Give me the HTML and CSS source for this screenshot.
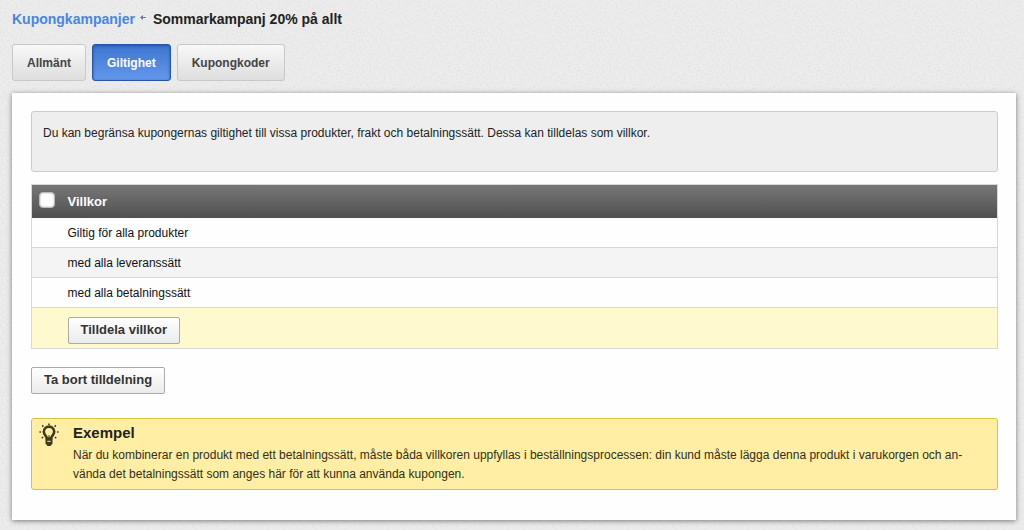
FILE: index.html
```html
<!DOCTYPE html>
<html lang="sv">
<head>
<meta charset="utf-8">
<title>Kupongkampanjer</title>
<link rel="stylesheet" href="styles.css">
</head>
<body>
<nav class="breadcrumb">
  <a class="crumb-link" href="#">Kupongkampanjer</a>
  <svg class="crumb-arrow" viewBox="0 0 7 7" aria-hidden="true"><path d="M0 3.5 3 1V6ZM3 3H6V4H3Z"/></svg>
  <h1 class="crumb-title">Sommarkampanj 20% på allt</h1>
</nav>
<div class="tabs">
  <button class="tab" type="button">Allmänt</button>
  <button class="tab tab-active" type="button">Giltighet</button>
  <button class="tab" type="button">Kupongkoder</button>
</div>
<main class="panel">
  <div class="info">Du kan begränsa kupongernas giltighet till vissa produkter, frakt och betalningssätt. Dessa kan tilldelas som villkor.</div>
  <table class="terms">
    <thead>
      <tr><th class="check-cell"><input class="check" type="checkbox" aria-label="Markera alla villkor"></th><th>Villkor</th></tr>
    </thead>
    <tbody>
      <tr><td></td><td>Giltig för alla produkter</td></tr>
      <tr class="alt"><td></td><td>med alla leveranssätt</td></tr>
      <tr><td></td><td>med alla betalningssätt</td></tr>
      <tr class="assign"><td></td><td><button class="button" type="button">Tilldela villkor</button></td></tr>
    </tbody>
  </table>
  <button class="button remove" type="button">Ta bort tilldelning</button>
  <section class="example">
    <svg class="bulb" viewBox="0 0 20 24" aria-hidden="true">
      <path class="bulb-glass" d="M8 15.5C8 13.4 4.8 12 4.8 8.8A5.2 5.2 0 0 1 15.2 8.8C15.2 12 12 13.4 12 15.5Z"/>
      <path class="bulb-wire" d="M10 15V12"/>
      <path class="bulb-base" d="M6.5 15H13.5V20.5L11.5 23H8.5L6.5 20.5Z"/>
      <path class="bulb-slot" d="M8.3 18.3H11.7"/>
      <path class="bulb-rays" d="M10 .6V2M3.2 2.4 4.4 3.6M16.8 2.4 15.6 3.6M.4 9H2M18 9H19.6M2.8 15.2 4 14M17.2 15.2 16 14"/>
    </svg>
    <div>
      <h2 class="example-title">Exempel</h2>
      <p class="example-text">När du kombinerar en produkt med ett betalningssätt, måste båda villkoren uppfyllas i beställningsprocessen: din kund måste lägga denna produkt i varukorgen och an&shy;vända det betalningssätt som anges här för att kunna använda kupongen.</p>
    </div>
  </section>
</main>
</body>
</html>
```

FILE: styles.css
```css
* { box-sizing: border-box; }
body {
  margin: 0;
  padding: 8px 8px 10px 12px;
  background-color: #ededed;
  background-image: url("data:image/svg+xml,%3Csvg xmlns='http://www.w3.org/2000/svg' width='120' height='120'%3E%3Cfilter id='n'%3E%3CfeTurbulence type='fractalNoise' baseFrequency='.5' numOctaves='2' stitchTiles='stitch'/%3E%3CfeColorMatrix values='0 0 0 0 0 0 0 0 0 0 0 0 0 0 0 .1 0 0 0 -.04'/%3E%3C/filter%3E%3Crect width='120' height='120' filter='url(%23n)'/%3E%3C/svg%3E");
  font: 12px/20px "Liberation Sans", Arial, sans-serif;
  color: #222;
}
.breadcrumb { display: flex; align-items: center; height: 20px; padding-top: 2px; }
.crumb-link { color: #4787e2; font-size: 14px; font-weight: bold; text-decoration: none; }
.crumb-arrow { width: 7px; height: 7px; margin: 0 6px 4px 5px; fill: #68798e; }
.crumb-title { margin: 0; font-size: 14px; line-height: 20px; }
.tabs { display: flex; gap: 6px; margin: 16px 0 12px; }
.tab {
  height: 37px;
  padding: 0 14px;
  border: 1px solid #c8c8c8;
  border-radius: 3px;
  background: linear-gradient(#f8f8f8, #dedede);
  font: bold 12px/20px "Liberation Sans", Arial, sans-serif;
  color: #444;
}
.tab-active {
  border-color: #2754a6;
  background: linear-gradient(#3d75cf, #6398ec);
  box-shadow: inset 0 1px 3px #2556a8;
  color: #fff;
}
.panel {
  padding: 18px 18px 30px 19px;
  background: #fefefe;
  box-shadow: 0 1px 5px #777;
}
.info {
  min-height: 61px;
  padding: 11px;
  border: 1px solid #ccc;
  border-radius: 3px;
  background: #eee;
}
.terms {
  width: 100%;
  margin: 12px 0 18px;
  border: 1px solid #d8d8d8;
  border-collapse: collapse;
  color: #111;
}
.terms th {
  height: 33px;
  padding: 2px 0 0;
  text-align: left;
  font-size: 13px;
  color: #fff;
}
.terms thead tr { background: linear-gradient(#777, #505050); }
.terms .check-cell { width: 36px; padding: 0 0 3px 7px; vertical-align: middle; }
.check {
  display: block;
  appearance: none;
  width: 16px;
  height: 16px;
  margin: 0;
  border: 1px solid #bbb;
  border-radius: 4px;
  background: #fff;
  box-shadow: inset 0 0 2px #aaa;
}
.terms td { padding: 5px 0 4px; border-bottom: 1px solid #d8d8d8; }
.terms .alt { background: #f4f4f4; }
.terms .assign { background: #fffacd; }
.terms .assign td { padding: 9px 0 4px; }
.button {
  display: block;
  height: 27px;
  padding: 0 12px;
  border: 1px solid #aaa;
  border-radius: 2px;
  background: linear-gradient(#fff, #ebebeb);
  font: bold 13px/20px "Liberation Sans", Arial, sans-serif;
  color: #333;
}
.remove { margin-bottom: 24px; }
.example {
  display: grid;
  grid-template-columns: 34px 1fr;
  padding: 4px 24px 5px 7px;
  border: 1px solid #d9c33c;
  border-radius: 3px;
  background: #ffeea3;
  color: #332f1a;
}
.bulb { width: 20px; height: 24px; fill: none; stroke: #3f391f; }
.bulb-glass { stroke-width: 2.6; }
.bulb-base { fill: #3f391f; stroke: none; }
.bulb-slot { stroke: #ffeea3; }
.bulb-rays { stroke-width: 1.6; }
.example-title { margin: 0; font-size: 15px; line-height: 20px; color: #222; }
.example-text { margin: 3px 0 0; line-height: 19px; }
```
